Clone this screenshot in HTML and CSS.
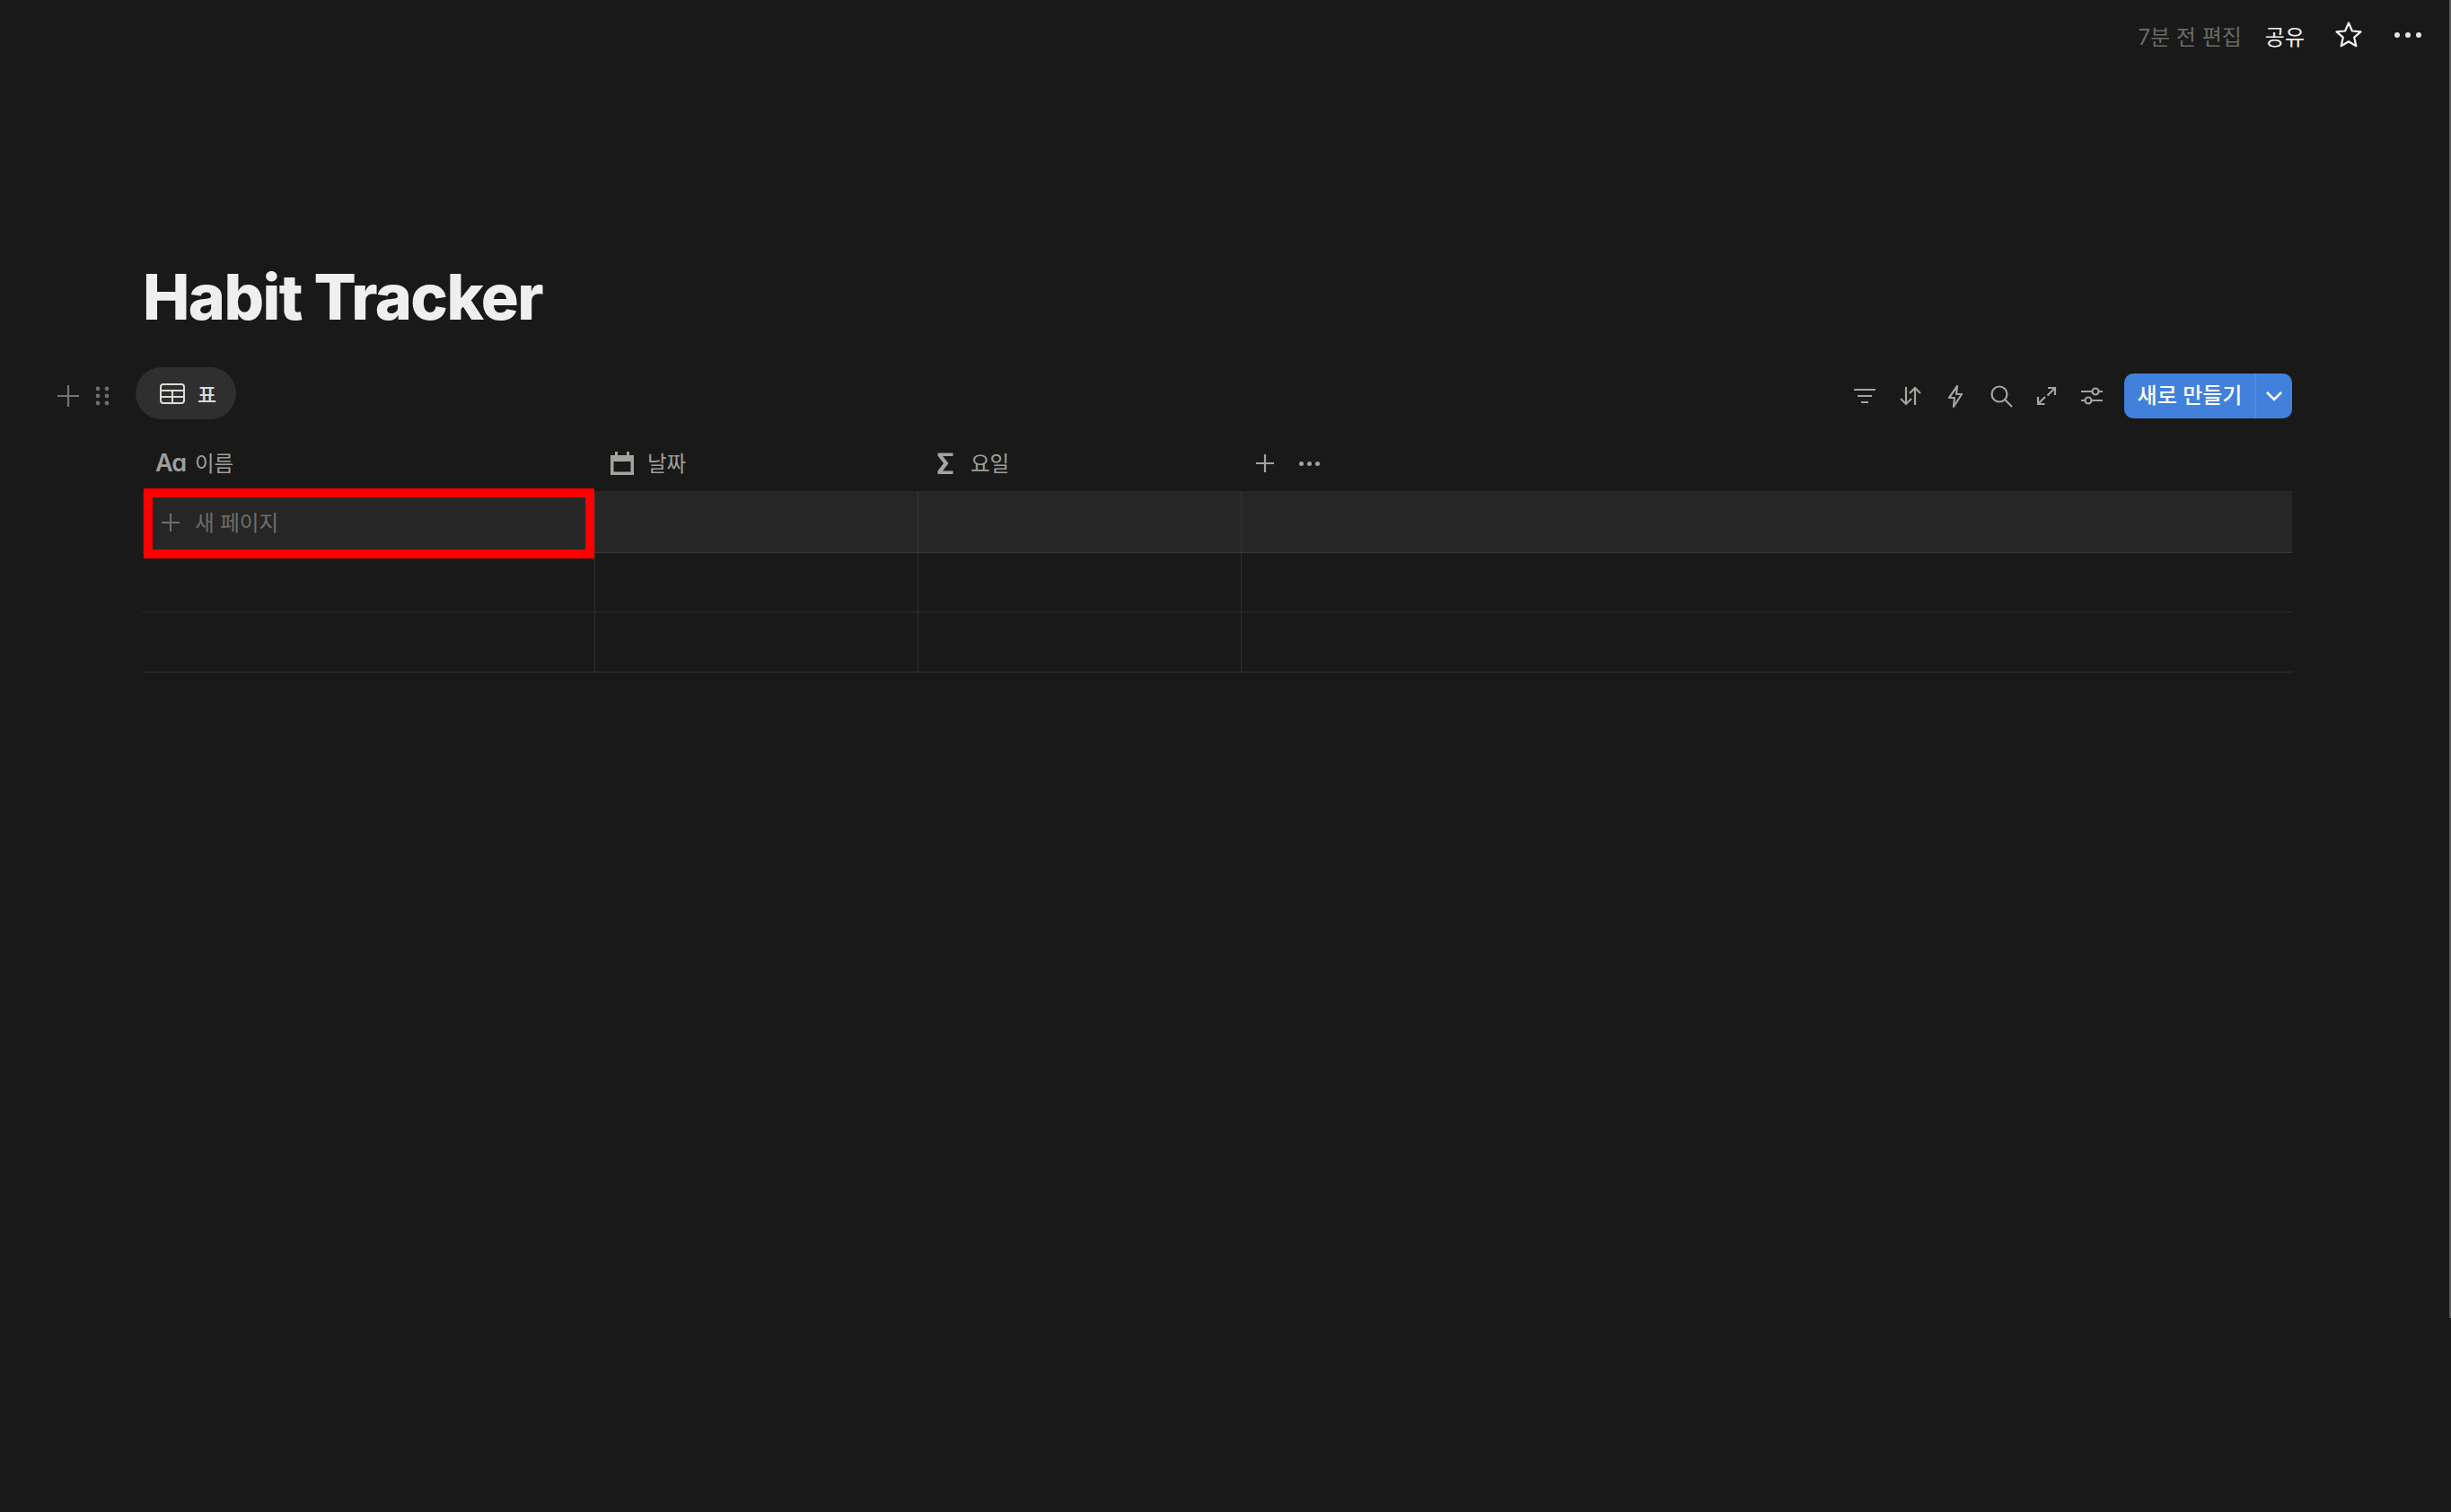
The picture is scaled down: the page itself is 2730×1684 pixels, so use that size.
FILE: index.html
```html
<!DOCTYPE html>
<html lang="ko">
<head>
  <meta charset="UTF-8" />
  <title>Habit Tracker</title>
  <link rel="stylesheet" href="styles.css">
</head>
<body>
  <div class="scroll-thumb"></div>

  <div class="topbar">
    <span class="edited">7분 전 편집</span>
    <span class="share">공유</span>
    <svg class="star" width="32" height="32" viewBox="0 0 32 32"><path d="M16 2.500l3.900 9 9.600.9-7.300 6.300 2.200 9.500-8.400-5-8.400 5 2.200-9.500-7.300-6.300 9.600-.9z" fill="none" stroke="#f0efed" stroke-width="2.200" stroke-linejoin="round"/></svg>
    <span class="more-dots"><i></i><i></i><i></i></span>
  </div>

  <h1 class="title">Habit Tracker</h1>

  <div class="view-row">
    <svg class="handle-plus" width="26" height="26" viewBox="0 0 26 26"><path d="M13 1v24M1 13h24" stroke="#74736f" stroke-width="2.200" fill="none"/></svg>
    <svg class="handle-drag" width="16" height="22" viewBox="0 0 16 22"><g fill="#6e6d69"><circle cx="3" cy="3" r="2.400"/><circle cx="13" cy="3" r="2.400"/><circle cx="3" cy="11" r="2.400"/><circle cx="13" cy="11" r="2.400"/><circle cx="3" cy="19" r="2.400"/><circle cx="13" cy="19" r="2.400"/></g></svg>
    <div class="view-pill">
      <svg width="28" height="23" viewBox="0 0 28 23"><g fill="none" stroke="#dcdbd8" stroke-width="2"><rect x="1" y="1" width="26" height="21" rx="3"/><path d="M1 8h26M1 15h26M14 8v14"/></g></svg>
      <span>표</span>
    </div>
    <div class="tools">
      <svg width="26" height="26" viewBox="0 0 26 26"><path d="M1 6h24M5 13h16M9 20h8" stroke="#a5a39e" stroke-width="2.200" fill="none"/></svg>
      <svg width="26" height="26" viewBox="0 0 26 26"><path d="M8 3v19M2 16l6 6 6-6M18 23V4M12 10l6-6 6 6" stroke="#a5a39e" stroke-width="2.200" fill="none"/></svg>
      <svg width="26" height="26" viewBox="0 0 26 26"><path d="M15 2L6 15h6l-1 10 9-14h-6z" stroke="#a5a39e" stroke-width="2.200" stroke-linejoin="round" fill="none"/></svg>
      <svg width="26" height="26" viewBox="0 0 26 26"><circle cx="11" cy="11" r="8.500" stroke="#a5a39e" stroke-width="2.200" fill="none"/><path d="M17 17l8 8" stroke="#a5a39e" stroke-width="2.200" fill="none"/></svg>
      <svg width="26" height="26" viewBox="0 0 26 26"><path d="M15 4h8v8M23 4l-8.500 8.500M11.500 22H4v-8M4 22l8-8" stroke="#a5a39e" stroke-width="2.200" fill="none"/></svg>
      <svg width="26" height="26" viewBox="0 0 26 26"><g stroke="#a5a39e" stroke-width="2.200" fill="none"><path d="M1 8h12M21 8h4M1 18h4M13 18h12"/><circle cx="17" cy="8" r="3.500"/><circle cx="9" cy="18" r="3.500"/></g></svg>
      <div class="new-btn">
        <span class="new-label">새로 만들기</span>
        <span class="new-arrow"><svg width="20" height="12" viewBox="0 0 20 12"><path d="M2 2l8 8 8-8" stroke="#fff" stroke-width="2.600" fill="none"/></svg></span>
      </div>
    </div>
  </div>

  <div class="table">
    <div class="table-head">
      <div class="col-head">
        <span class="aa">Aa</span>
        <span>이름</span>
      </div>
      <div class="col-head">
        <svg class="col-icon" width="26" height="26" viewBox="0 0 26 26"><path d="M0 4h5V0h3v4h10V0h3v4h5v22H0zM3.500 11v11.500h19V11z" fill="#a5a39e" fill-rule="evenodd"/></svg>
        <span>날짜</span>
      </div>
      <div class="col-head">
        <svg class="col-icon" width="26" height="26" viewBox="0 0 26 26"><path d="M4.500 1.500h17v3.500H10l6.500 8-6.500 8.500h11.500V25h-17v-3.500L11 13 4.500 4.500z" fill="#a5a39e"/></svg>
        <span>요일</span>
      </div>
      <div class="col-head col-add">
        <svg width="20" height="20" viewBox="0 0 20 20"><path d="M10 0v20M0 10h20" stroke="#a5a39e" stroke-width="2.200" fill="none"/></svg>
        <span class="head-dots"><i></i><i></i><i></i></span>
      </div>
    </div>

    <div class="table-body">
      <div class="row row-hover">
        <div class="cell cell-new">
          <svg width="20" height="20" viewBox="0 0 20 20"><path d="M10 0v20M0 10h20" stroke="#6f6e6a" stroke-width="2" fill="none"/></svg>
          <span>새 페이지</span>
          <div class="highlight"></div>
        </div>
        <div class="cell"></div>
        <div class="cell"></div>
        <div class="cell cell-last"></div>
      </div>
      <div class="row">
        <div class="cell"></div>
        <div class="cell"></div>
        <div class="cell"></div>
        <div class="cell cell-last"></div>
      </div>
      <div class="row">
        <div class="cell"></div>
        <div class="cell"></div>
        <div class="cell"></div>
        <div class="cell cell-last"></div>
      </div>
    </div>
  </div>
</body>
</html>
```

FILE: styles.css
```css
html, body {
  margin: 0;
  padding: 0;
  height: 100%;
  overflow: hidden;
  background: #191919;
  font-family: "Inter", "Noto Sans CJK KR", sans-serif;
}
.scroll-thumb {
  position: fixed;
  top: 0;
  right: 0;
  width: 2px;
  height: 1468px;
  background: #5a5a5a;
}

/* top bar */
.topbar {
  height: 78px;
  display: flex;
  align-items: center;
  justify-content: flex-end;
  padding: 0 33px 2px 0;
  font-size: 24px;
}
.edited { color: #6a6966; margin-right: 26px; }
.share { color: #f0efed; margin-right: 33px; }
.star { margin-right: 35px; }
.more-dots { display: flex; gap: 6px; }
.more-dots i {
  width: 6px;
  height: 6px;
  border-radius: 50%;
  background: #e6e5e2;
}

.title {
  margin: 209px 0 0 159px;
  height: 84px;
  line-height: 84px;
  font-size: 70px;
  font-weight: 800;
  letter-spacing: -1.600px;
  color: #f0efed;
}

/* view tabs + toolbar */
.view-row {
  display: flex;
  align-items: center;
  height: 58px;
  margin-top: 36px;
  padding: 0 177px 0 63px;
}
.handle-plus { margin-top: 5px; }
.handle-drag { margin: 5px 29px 0 17px; }
.view-pill {
  display: flex;
  align-items: center;
  gap: 14px;
  height: 58px;
  width: 112px;
  box-sizing: border-box;
  padding-left: 27px;
  border-radius: 29px;
  background: #2f2f2f;
  color: #dcdbd8;
  font-size: 23px;
  font-weight: 500;
}
.tools {
  display: flex;
  align-items: center;
  gap: 24.500px;
  margin: 6px 0 0 auto;
}
.new-btn {
  display: flex;
  align-items: center;
  height: 50px;
  margin-left: -1px;
  border-radius: 10px;
  background: #4281db;
  color: #fff;
  font-size: 24px;
  font-weight: 500;
}
.new-label {
  width: 146px;
  text-align: center;
  line-height: 50px;
  border-right: 1px solid #5a91e0;
}
.new-arrow {
  display: flex;
  align-items: center;
  justify-content: center;
  width: 40px;
}

/* table */
.table { margin-left: 159px; margin-right: 177px; }
.table-head {
  display: grid;
  grid-template-columns: 504px 360px 360px 1fr;
  height: 80px;
  box-sizing: border-box;
  padding-top: 16px;
}
.col-head {
  display: flex;
  align-items: center;
  gap: 15px;
  padding-left: 17px;
  font-size: 23.500px;
  color: #9f9e9a;
}
.col-head:first-child { padding-left: 14px; gap: 13px; }
.col-head .col-icon { margin-top: 2px; }
.col-head.col-add svg { margin-top: 2px; }
.aa {
  font-size: 27px;
  font-weight: 600;
  width: 31px;
  letter-spacing: -1px;
  font-feature-settings: "cv11";
}
.col-add { padding-left: 16px; gap: 28px; }
.head-dots { display: flex; gap: 4px; margin-top: 2px; }
.head-dots i {
  width: 5px;
  height: 5px;
  border-radius: 50%;
  background: #a5a39e;
}

.table-body { border-top: 1px solid #2a2a2a; }
.row {
  display: grid;
  grid-template-columns: 504px 360px 360px 1fr;
  height: 67px;
  box-sizing: border-box;
  border-bottom: 1px solid #2f2f2f;
}
.row:nth-child(1) { height: 68px; }
.row:nth-child(2) { height: 66px; }
.row-hover { background: #262626; border-bottom-color: #363636; }
.cell { border-right: 1px solid #2f2f2f; box-sizing: border-box; }
.row-hover .cell { border-right-color: #363636; }
.cell-last { border-right: none; }
.cell-new {
  position: relative;
  display: flex;
  align-items: center;
  gap: 17px;
  padding: 0 0 2px 21px;
  font-size: 23.500px;
  color: #6f6e6a;
}
.cell-new svg { margin-top: 2px; }
/* red annotation over the first cell */
.highlight {
  position: absolute;
  left: 1px;
  top: -4px;
  width: 502px;
  height: 78px;
  box-sizing: border-box;
  border: 10px solid #ff0000;
}
```
